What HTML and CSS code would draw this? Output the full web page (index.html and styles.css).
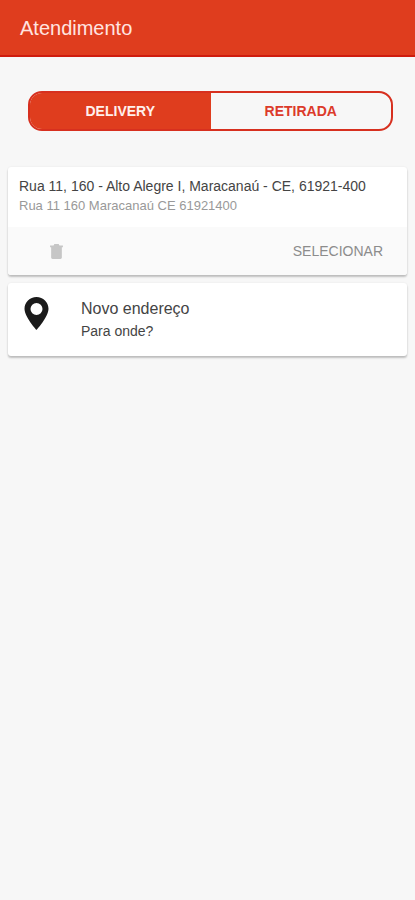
FILE: index.html
```html
<!DOCTYPE html>
<html lang="pt-BR">
<head>
<meta charset="utf-8">
<meta name="viewport" content="width=device-width, initial-scale=1">
<title>Atendimento</title>
<link rel="stylesheet" href="styles.css">
</head>
<body>
<header class="topbar"><h1 class="topbar-title">Atendimento</h1></header>
<main class="content">
  <div class="segment">
    <button type="button" class="segment-option active" aria-pressed="true">DELIVERY</button>
    <button type="button" class="segment-option" aria-pressed="false">RETIRADA</button>
  </div>
  <section class="card">
    <div class="address">
      <h2 class="address-title">Rua 11, 160 - Alto Alegre I, Maracanaú - CE, 61921-400</h2>
      <p class="address-detail">Rua 11 160 Maracanaú CE 61921400</p>
    </div>
    <div class="actions">
      <button type="button" class="delete" aria-label="Excluir">
        <svg class="trash" viewBox="0 0 12 14" aria-hidden="true"><path d="M0 1.5h3.2L4 0h4l.8 1.500H12V3H0zM1 3h10v9.700Q11 14 9.700 14H2.300Q1 14 1 12.700z"/></svg>
      </button>
      <button type="button" class="select">SELECIONAR</button>
    </div>
  </section>
  <button type="button" class="card new-address">
    <svg class="pin" viewBox="0 0 24 33" aria-hidden="true"><path fill-rule="evenodd" d="M12 0C5.300 0 0 5.200 0 11.800C0 20 12 33 12 33S24 20 24 11.800C24 5.200 18.700 0 12 0zM12 6a6 6 0 1 1 0 12a6 6 0 0 1 0-12z"/></svg>
    <span class="new-text">
      <span class="new-title">Novo endereço</span>
      <span class="new-subtitle">Para onde?</span>
    </span>
  </button>
</main>
</body>
</html>
```
FILE: styles.css
```css
* {
  box-sizing: border-box;
}

body {
  margin: 0;
  background: #f7f7f7;
  color: #444;
  font-family: "Liberation Sans", Arial, sans-serif;
}

h1, h2, p {
  margin: 0;
  font-weight: 400;
}

button {
  font: inherit;
  border: 0;
  padding: 0;
  background: none;
}

.topbar {
  display: flex;
  align-items: center;
  height: 57px;
  padding: 0 20px;
  background: #df3d1e;
  border-bottom: 2px solid #cf1c0e;
}

.topbar-title {
  font-size: 20px;
  line-height: 24px;
  color: #ffe4e0;
}

.content {
  display: flex;
  flex-direction: column;
  gap: 8px;
  padding: 34px 8px 8px;
}

.segment {
  display: flex;
  height: 40px;
  margin: 0 14px 28px 20px;
  border: 2px solid #d7301f;
  border-radius: 14px;
  overflow: hidden;
}

.segment-option {
  flex: 1;
  font-size: 14px;
  font-weight: 700;
  color: #dc3a2a;
}

.segment-option.active {
  background: #df3d1e;
  color: #fff0ec;
}

.card {
  background: #fff;
  border-radius: 3px;
  box-shadow: 0 2px 2px rgba(0, 0, 0, .22), 0 0 2px rgba(0, 0, 0, .08);
  overflow: hidden;
}

.address {
  padding: 9px 11px 11px;
}

.address-title {
  font-size: 14px;
  line-height: 20px;
}

.address-detail {
  font-size: 13px;
  line-height: 20px;
  color: #999;
}

.actions {
  display: flex;
  align-items: center;
  justify-content: space-between;
  height: 48px;
  padding: 0 24px 0 42px;
  background: #fafafa;
}

.delete,
.trash,
.pin {
  display: block;
}

.trash {
  width: 13px;
  height: 15px;
  fill: #c6c6c6;
}

.select {
  font-size: 14px;
  line-height: 20px;
  color: #8c8c8c;
}

.new-address {
  display: flex;
  align-items: flex-start;
  gap: 32px;
  padding: 14px 16px 15px;
  color: #444;
  text-align: left;
}

.pin {
  width: 25px;
  height: 33px;
  fill: #1b1b1b;
}

.new-text {
  display: flex;
  flex-direction: column;
}

.new-title {
  font-size: 16px;
  line-height: 24px;
}

.new-subtitle {
  font-size: 14px;
  line-height: 20px;
}
```
